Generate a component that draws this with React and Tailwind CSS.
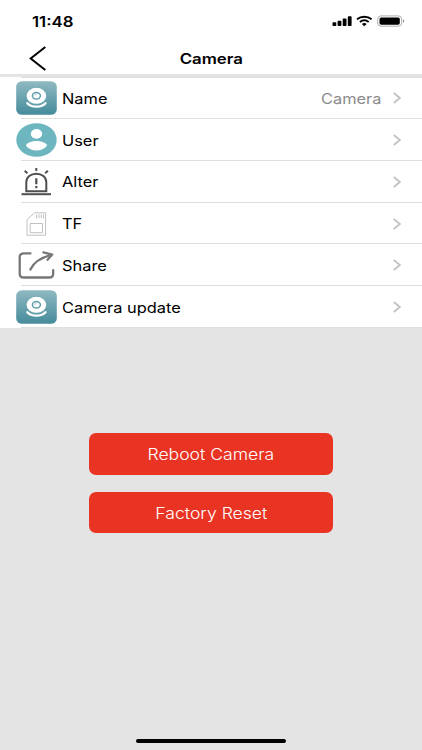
function CameraIcon() {
  return (
    <svg className="w-[41px] h-[34px]" viewBox="0 0 41 34">
      <defs>
        <linearGradient id="tile" x1="0" y1="0" x2="0" y2="1">
          <stop offset="0" stopColor="#8fb9c1" />
          <stop offset="1" stopColor="#458b9b" />
        </linearGradient>
      </defs>
      <rect x="0.2" y="0.2" width="40.6" height="33.6" rx="6" ry="5.2" fill="url(#tile)" />
      <path d="M11.3 22.2c4 4.6 14.2 4.6 18.2 0" fill="none" stroke="#fff" strokeWidth="2.2" strokeLinecap="round" />
      <ellipse cx="20.4" cy="15" rx="10.4" ry="8.8" fill="#6ea6b2" />
      <ellipse cx="20.4" cy="14.8" rx="9.8" ry="8" fill="#fff" />
      <ellipse cx="20.4" cy="14.8" rx="4" ry="3.3" fill="#fff" stroke="#5f9dab" strokeWidth="1.5" />
      <path d="M18.6 14.8c.2-.9 1-1.4 2-1.4" fill="none" stroke="#8fb9c1" strokeWidth="0.8" />
    </svg>
  );
}

function UserIcon() {
  return (
    <svg className="w-[41px] h-[34px]" viewBox="0 0 41 34">
      <ellipse cx="20.5" cy="17" rx="20.2" ry="16.8" fill="#6db6bf" />
      <ellipse cx="20.5" cy="10.9" rx="5.7" ry="4.8" fill="#fff" />
      <path d="M10 22.8c0-3.2 6-4.9 10.5-4.9s10.5 1.7 10.5 4.9c-2.3 3.1-6.2 4.8-10.5 4.8s-8.2-1.7-10.5-4.8z" fill="#fff" />
    </svg>
  );
}

function AlarmIcon() {
  return (
    <svg className="w-[41px] h-[34px]" viewBox="0 0 41 34" fill="none" stroke="#4f4f4f" strokeWidth="2">
      <path d="M5.5 29.2h29.5" />
      <path d="M10.3 26.3V17.2c0-5 4.4-8.5 10-8.5s10 3.5 10 8.5v9.1z" />
      <path d="M20.3 3v3M8.7 5.8l2.7 2.5M31.9 5.8l-2.7 2.5" />
      <path d="M20.3 13.2v6M20.3 21v2.2" strokeWidth="2.2" />
    </svg>
  );
}

function CardIcon() {
  return (
    <svg className="w-[41px] h-[34px]" viewBox="0 0 41 34" fill="none" stroke="#c0c0c0" strokeWidth="1">
      <path d="M18.6 5.8h11v22.4H11V12.6z" />
      <path d="M14.2 16.5h12.3v9.2H14.2z" />
      <path d="M20.6 7.3v4M23 7.3v4M25.3 7.3v4M27.5 7.3v4" />
    </svg>
  );
}

function ShareIcon() {
  return (
    <svg className="w-[41px] h-[34px]" viewBox="0 0 41 34" fill="none" stroke="#777" strokeWidth="2.3" strokeLinecap="round" strokeLinejoin="round">
      <path d="M14.5 5.3H8c-3 0-4.3 1.3-4.3 3.7v16.7c0 2.4 1.3 3.8 4.3 3.8h25c3 0 4.2-1.4 4.2-3.8v-3.5" />
      <path d="M14.4 21.5C17 15.7 23 10.3 35 7" />
      <path d="M27.4 4.3l8.8 2.3-4.6 5.2" />
    </svg>
  );
}

function Chevron() {
  return (
    <svg className="w-[8px] h-[12px]" viewBox="0 0 8 12" fill="none" stroke="#c2c2c4" strokeWidth="1.8">
      <path d="M0.8 1L6.9 6 0.8 11" />
    </svg>
  );
}

const rows = [
  { label: 'Name', icon: CameraIcon, value: 'Camera' },
  { label: 'User', icon: UserIcon },
  { label: 'Alter', icon: AlarmIcon },
  { label: 'TF', icon: CardIcon },
  { label: 'Share', icon: ShareIcon },
  { label: 'Camera update', icon: CameraIcon },
];

function Row({ label, icon: Icon, value }) {
  return (
    <li className="relative h-[41.8px] pt-[0.4px] flex items-center pl-[15.5px] pr-[21px] bg-white">
      <Icon />
      <span className="ml-[5px] pt-[0.6px] text-[14.5px] text-black origin-left scale-x-[1.13]">{label}</span>
      <span className="ml-auto mr-[12px] pt-[0.6px] text-[14.5px] text-[#8b8b8d] origin-right scale-x-[1.13]">{value}</span>
      <Chevron />
      <div className="absolute left-[21px] right-0 bottom-0 h-px bg-[#dfdfe0]" />
    </li>
  );
}

function StatusBar() {
  return (
    <div className="h-[42px] flex items-center pl-[32px] pr-[17px]">
      <span className="text-[14px] font-semibold origin-left scale-x-[1.2]">11:48</span>
      <svg className="ml-auto w-[73px] h-[14px]" viewBox="0 0 73 14">
        <rect x="0.5" y="8.3" width="3.8" height="3.7" rx="0.8" />
        <rect x="5.6" y="6.8" width="3.8" height="5.2" rx="0.8" />
        <rect x="10.7" y="4.6" width="3.8" height="7.4" rx="0.8" />
        <rect x="15.8" y="2.3" width="3.8" height="9.7" rx="0.8" />
        <g fill="none" stroke="#000" strokeWidth="1.9">
          <path d="M25 5.3c4.2-3.5 10.4-3.5 14.6 0" />
          <path d="M27.9 8c2.6-2 6.2-2 8.8 0" />
        </g>
        <path d="M29.9 9.9c1.4-1.1 3.4-1.1 4.8 0L32.3 12.2z" />
        <rect x="45.7" y="1.9" width="24" height="10.3" rx="3.3" fill="#fff" stroke="#a5a5a5" strokeWidth="0.9" />
        <rect x="47.5" y="3.4" width="20.3" height="7.3" rx="1.7" />
        <path d="M71 5.5c1.6.4 1.6 2.8 0 3.2z" fill="#8a8a8a" />
      </svg>
    </div>
  );
}

export default function App() {
  return (
    <div className="w-[422px] h-[750px] flex flex-col bg-[#e4e4e4] overflow-hidden font-['Inter','Liberation_Sans',sans-serif] text-black">
      <header className="h-[74px] bg-white">
        <StatusBar />
        <div className="relative h-[34px] flex items-center justify-center">
          <svg className="absolute left-[29px] top-[4px] w-[18px] h-[25px]" viewBox="0 0 18 25" fill="none" stroke="#000" strokeWidth="2">
            <path d="M16.3 1L1.7 12.5 16.3 24" />
          </svg>
          <h1 className="text-[14.5px] font-semibold scale-x-[1.16]">Camera</h1>
        </div>
      </header>
      <div className="h-[3.2px]" />
      <ul className="relative">
        <li className="absolute z-10 left-[21px] right-0 top-0 h-px bg-[#dfdfe0]" />
        {rows.map((row) => (
          <Row key={row.label} {...row} />
        ))}
      </ul>
      <div className="mt-[105.2px] flex flex-col items-center gap-[17px]">
        <button className="w-[244px] h-[41.5px] pt-[2px] rounded-[7px] bg-[#e93323] text-white text-[15.5px] font-[350]">
          <span className="inline-block scale-x-[1.135]">Reboot Camera</span>
        </button>
        <button className="w-[244px] h-[41.5px] pt-[2px] rounded-[7px] bg-[#e93323] text-white text-[15.5px] font-[350]">
          <span className="inline-block scale-x-[1.135]">Factory Reset</span>
        </button>
      </div>
      <div className="mt-auto mb-[7px] self-center w-[150px] h-[4px] rounded-full bg-black" />
    </div>
  );
}
